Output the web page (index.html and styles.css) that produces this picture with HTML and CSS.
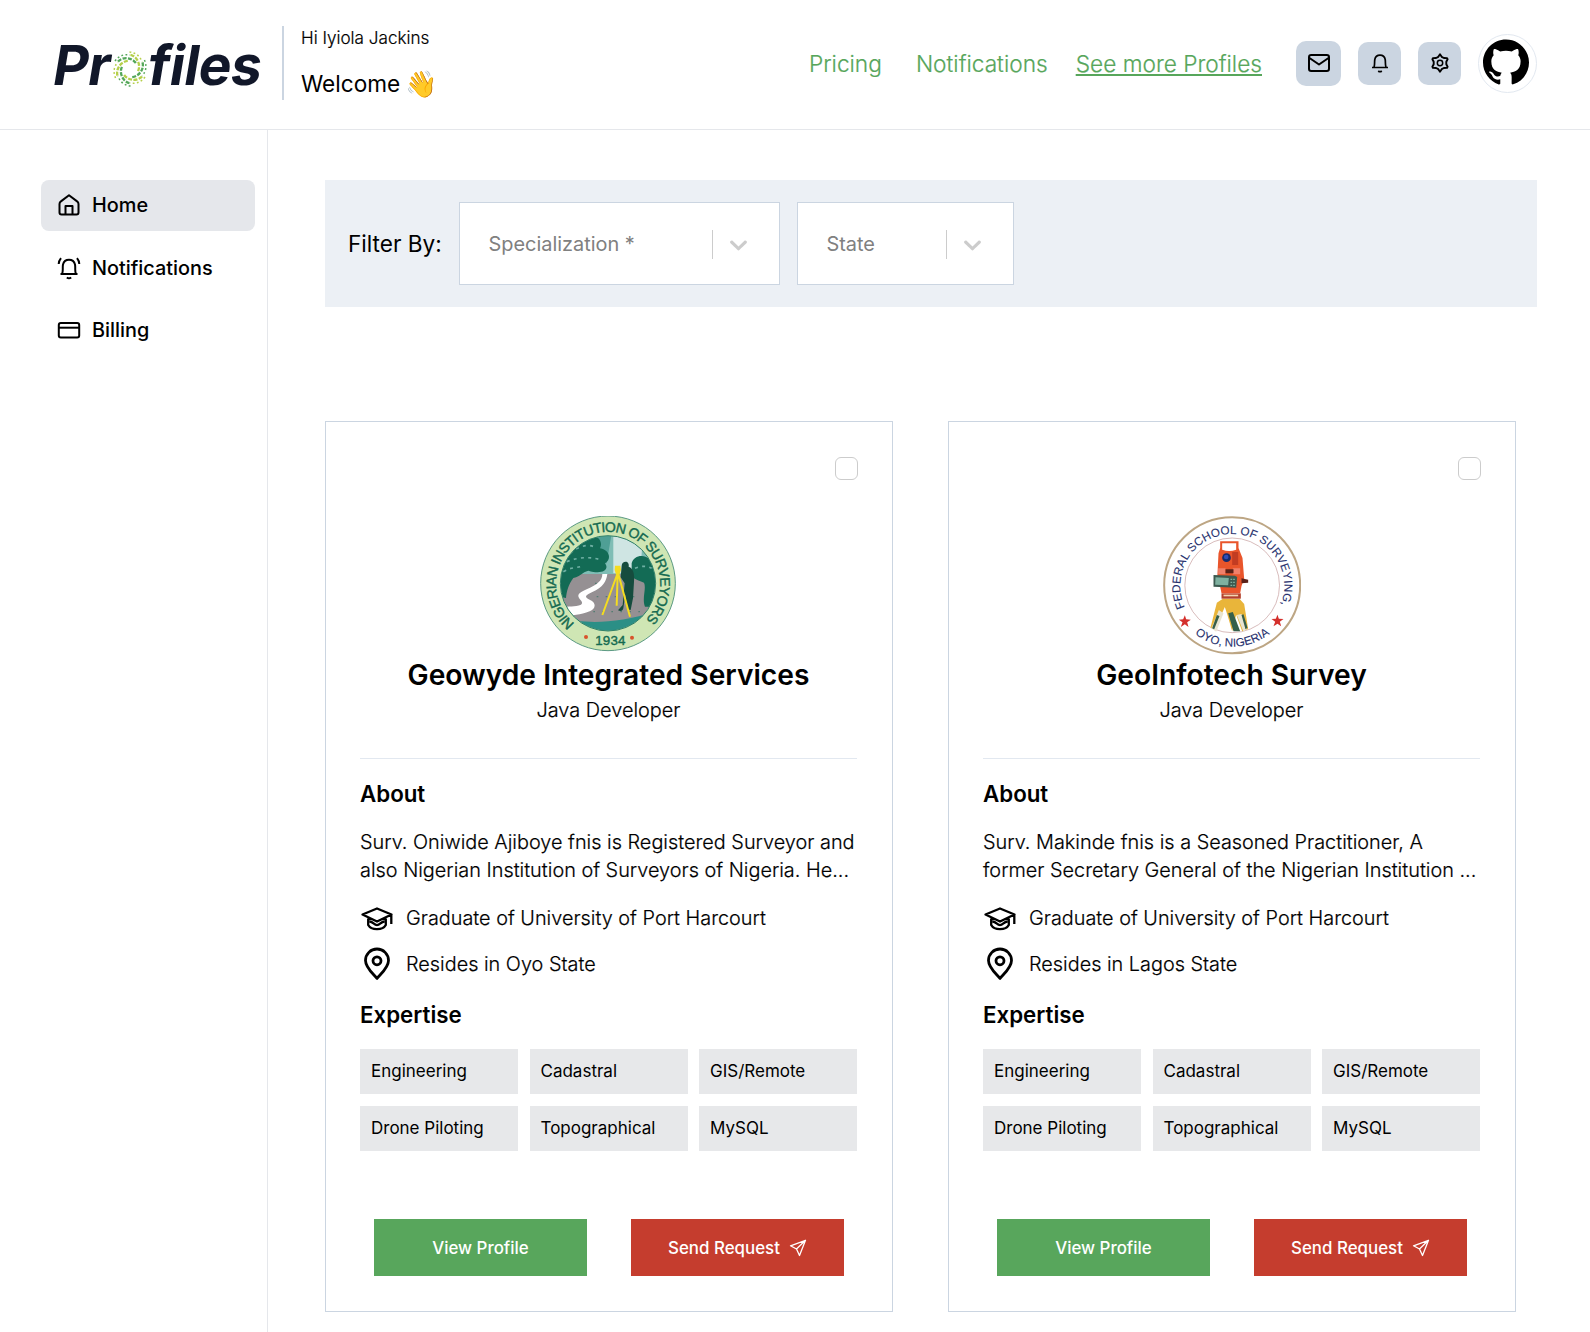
FILE: index.html
```html
<!DOCTYPE html>
<html lang="en">
<head>
<meta charset="utf-8">
<title>Profiles</title>
<link rel="stylesheet" href="styles.css">
</head>
<body>
<svg class="sprite" aria-hidden="true">
  <symbol id="i-cap" viewBox="0 0 34 34"><path d="M2.500 13.500 17 7.500l14.500 6L17 20.500Z M31.300 13.500v9.500 M8.200 17.500v6.500c3 5.500 14.600 5.500 17.600 0v-6.500 M9.500 20.500c3.500 0 4.500 3.700 7.500 3.700s4-3.700 7.500-3.700" fill="none" stroke="#000" stroke-width="2.300" stroke-linejoin="round"/></symbol>
  <symbol id="i-pin" viewBox="0 0 34 34"><path d="M17 31.500C14 27.500 5.500 21 5.500 13.500a11.500 11.500 0 0 1 23 0C28.500 21 20 27.500 17 31.500Z" fill="none" stroke="#000" stroke-width="2.800" stroke-linejoin="round"/><circle cx="17" cy="13.800" r="4" fill="none" stroke="#000" stroke-width="2.800"/></symbol>
  <symbol id="i-send" viewBox="0 0 18 18"><path d="M16.500 1.300 1.500 6.800l6 3.200 3 6.500Z M16.500 1.300 7.500 10" fill="none" stroke="#fff" stroke-width="1.300" stroke-linejoin="round"/></symbol>
  <symbol id="i-chev" viewBox="0 0 20 20"><path fill="#ccc" d="M4.516 7.548c.436-.446 1.043-.481 1.576 0L10 11.295l3.908-3.747c.533-.481 1.141-.446 1.574 0 .436.445.408 1.197 0 1.615-.406.418-4.695 4.502-4.695 4.502a1.100 1.100 0 0 1-1.576 0S4.924 9.581 4.516 9.163s-.436-1.170 0-1.615z"/></symbol>
</svg>
<header class="header">
  <div class="brand">
    <span>Pr</span>
    <svg class="swirl" viewBox="-19 -19 38 38">
      <defs><g id="arm" fill="none" stroke="currentColor"><path d="M-12-7.500C-8-12 2-12.500 6.500-5" stroke-width="2.300" stroke-dasharray="4 1.400"/><path d="M-15-8C-11-13.500-6-15 0-14" stroke-width="1.500" stroke-dasharray="1.800 2.400"/></g></defs>
      <g class="leaf"><use href="#arm"/><use href="#arm" transform="rotate(120)"/><use href="#arm" transform="rotate(240)"/></g>
      <g class="lime"><use href="#arm" transform="rotate(60)"/><use href="#arm" transform="rotate(180)"/><use href="#arm" transform="rotate(300)"/></g>
    </svg>
    <span class="tail">files</span>
  </div>
  <div class="greeting">
    <p class="hi">Hi Iyiola Jackins</p>
    <p class="welcome"><span>Welcome</span> <span class="wave">👋</span></p>
  </div>
  <nav class="links">
    <a>Pricing</a><a>Notifications</a><a class="underlined">See more Profiles</a>
  </nav>
  <div class="actions">
    <button class="action action-lg"><svg width="24" height="24" viewBox="0 0 24 24"><rect x="2" y="4" width="20" height="16" rx="2.200"/><path d="m2.500 7 9.500 6.500L21.500 7"/></svg></button>
    <button class="action"><svg width="20" height="20" viewBox="0 0 20 20"><path d="M2 14.500h16M4 14.500c1-3 .3-5 .8-8a5.300 5.300 0 0 1 10.400 0c.5 3-.2 5 .8 8M8.200 18c1 .8 2.600.8 3.600 0" stroke-width="1.700"/></svg></button>
    <button class="action"><svg width="20" height="20" viewBox="0 0 20 20"><path d="M8.300 3.800 10 1.300l1.700 2.500 2.200 1.200 3.200.1.500 1.200-1.300 2.500v2.400l1.300 2.500-.5 1.200-3.200.1-2.200 1.200L10 18.700l-1.700-2.500L6.100 15l-3.200-.1-.5-1.200 1.300-2.500V8.800L2.400 6.300l.5-1.200L6.100 5Z" stroke-width="1.900"/><circle cx="10" cy="10" r="2.700" stroke-width="1.500"/></svg></button>
    <div class="avatar"><svg width="46" height="46" viewBox="0 0 24 24"><path d="M12 .297c-6.630 0-12 5.373-12 12 0 5.303 3.438 9.800 8.205 11.385.6.113.82-.258.82-.577 0-.285-.01-1.040-.015-2.040-3.338.724-4.042-1.610-4.042-1.610C4.422 18.070 3.633 17.700 3.633 17.700c-1.087-.744.084-.729.084-.729 1.205.084 1.838 1.236 1.838 1.236 1.070 1.835 2.809 1.305 3.495.998.108-.776.417-1.305.76-1.605-2.665-.3-5.466-1.332-5.466-5.930 0-1.310.465-2.380 1.235-3.220-.135-.303-.54-1.523.105-3.176 0 0 1.005-.322 3.300 1.230.96-.267 1.980-.399 3-.405 1.020.006 2.040.138 3 .405 2.280-1.552 3.285-1.230 3.285-1.230.645 1.653.24 2.873.12 3.176.765.84 1.230 1.910 1.230 3.220 0 4.610-2.805 5.625-5.475 5.920.42.36.81 1.096.81 2.220 0 1.606-.015 2.896-.015 3.286 0 .315.21.69.825.57C20.565 22.092 24 17.592 24 12.297c0-6.627-5.373-12-12-12"/></svg></div>
  </div>
</header>
<div class="body">
  <aside class="sidebar">
    <a class="side-item active"><svg width="24" height="24" viewBox="0 0 24 24"><path d="M2.500 11v8.500a2 2 0 0 0 2 2h15a2 2 0 0 0 2-2V11c0-1-.5-2-1.400-2.600L12 2.200 3.900 8.400C3 9 2.500 10 2.500 11ZM8.500 21.500V13h7v8.500"/></svg><span>Home</span></a>
    <a class="side-item"><svg width="24" height="24" viewBox="0 0 24 24"><path d="M3.500 18h17M5 18c1.500-3 .3-6 1-9.500a6.200 6.200 0 0 1 12 0c.7 3.500-.5 6.500 1 9.500M4 2.200C2.500 4 1.800 6 1.700 8M20 2.200c1.500 1.800 2.200 3.800 2.300 5.800M9.800 21.500c1.400 1 3 1 4.400 0"/></svg><span>Notifications</span></a>
    <a class="side-item"><svg width="24" height="24" viewBox="0 0 24 24"><rect x="1.800" y="5" width="20.400" height="14.500" rx="2"/><path d="M2 9.700h20"/></svg><span>Billing</span></a>
  </aside>
  <main class="main">
    <section class="filter">
      <span class="filter-label">Filter By:</span>
      <div class="select select-wide"><span>Specialization *</span><i></i><svg width="29" height="29"><use href="#i-chev"/></svg></div>
      <div class="select select-narrow"><span>State</span><i></i><svg width="29" height="29"><use href="#i-chev"/></svg></div>
    </section>
    <section class="cards">
      <article class="card">
        <span class="check"></span>
        <svg class="emblem" viewBox="57 48 417 417">
          <defs>
            <path id="arc1" d="M164 371A156 156 0 1 1 366 370"/>
            <clipPath id="disc"><circle cx="264" cy="250" r="142"/></clipPath>
          </defs>
          <circle cx="264" cy="250" r="202" fill="#cfe6b4" stroke="#5b9a83" stroke-width="3"/>
          <g clip-path="url(#disc)">
            <path fill="#7fbdb5" d="M120 100h290v140H120z"/>
            <path fill="#cfe5e3" d="M280 100h90l-10 120h-80z"/>
            <path fill="#4f9f95" d="M215 100h60l-15 90h-40z"/>
            <path fill="#959093" d="M110 222h310v150H110z"/>
            <path fill="#2b8f86" d="M110 355c90 15 180 20 310-25v70H110z"/>
            <path fill="#136b55" d="M120 290V190c5-55 50-80 85-85 30 0 45 20 35 40 30 5 35 35 15 45 15 20-10 35-50 22-20 5-20 15-45 22-15 20-20 40-22 60ZM335 190c5-25 40-30 55-10l30 30v110h-45c-10-25 5-55-3-72-30-10-45-20-37-35Z"/>
            <path fill="none" stroke="#6fb0a4" stroke-width="5" stroke-dasharray="9 13" d="M150 160c30-25 60-30 80-15M140 185c40-15 70-15 105-5M130 215c25-15 40-10 60-18M345 205c20-8 35-8 50 0"/>
            <path fill="none" stroke="#557d73" stroke-width="4" stroke-dasharray="5 22" d="M230 290h120M220 335h150M225 250h25"/>
            <path fill="#fff" d="M247 222h15c-3 22-13 40-45 54-22 10-25 15-8 23 22 10 18 27 0 35-28 12-52 10-82 18l-2-28c20-8 40-2 58-10 10-7-6-15-8-25-2-22 72-25 72-67Z"/>
            <path fill="#164c3e" d="M305 197c0-8 6-12 12-12s11 6 9 15c14 5 18 22 16 45l-3 50-7 35-10-2-6-45-6 42c-2 10-9 9-16 6l14-16 6-65-12-18Z"/>
            <path fill="none" stroke="#f4dc20" stroke-width="6" d="M292 222 247 345M295 222l35 128M293 222l-3 95"/>
            <path fill="#f4dc20" d="M285 197h16l2 12-5 15h-10l-4-14Z"/>
          </g>
          <circle cx="264" cy="250" r="143" fill="none" stroke="#2f8069" stroke-width="3"/>
          <text class="ring-text green" font-size="42"><textPath href="#arc1" textLength="744">NIGERIAN INSTITUTION OF SURVEYORS</textPath></text>
          <text class="ring-text green" x="226" y="434" font-size="40" textLength="90">1934</text>
          <circle cx="198" cy="411" r="6" fill="#d8532b"/><circle cx="336" cy="413" r="6" fill="#d8532b"/>
        </svg>
        <h2 class="name">Geowyde Integrated Services</h2>
        <p class="role">Java Developer</p>
        <hr>
        <h3 class="heading">About</h3>
        <p class="about">Surv. Oniwide Ajiboye fnis is Registered Surveyor and<br>also Nigerian Institution of Surveyors of Nigeria. He...</p>
        <div class="facts">
          <div class="fact"><svg width="34" height="34"><use href="#i-cap"/></svg><span>Graduate of University of Port Harcourt</span></div>
          <div class="fact"><svg width="34" height="34"><use href="#i-pin"/></svg><span>Resides in Oyo State</span></div>
        </div>
        <h3 class="heading expertise">Expertise</h3>
        <div class="tags"><span>Engineering</span><span>Cadastral</span><span>GIS/Remote</span><span>Drone Piloting</span><span>Topographical</span><span>MySQL</span></div>
        <div class="buttons"><button class="btn view"><span>View Profile</span></button><button class="btn send"><span>Send Request</span><svg width="18" height="18"><use href="#i-send"/></svg></button></div>
      </article>
      <article class="card">
        <span class="check"></span>
        <svg class="emblem" viewBox="67.5 48 417 417">
          <defs>
            <path id="arc2" d="M136 322A156 156 0 1 1 424 314"/>
            <path id="arc3" d="M166 402A184 184 0 0 0 394 399"/>
          </defs>
          <circle cx="278" cy="256" r="204" fill="#fff" stroke="#bda684" stroke-width="6"/>
          <circle cx="278" cy="256" r="142" fill="#fff" stroke="#c49a9a" stroke-width="2"/>
          <path fill="#e9b53a" d="m232 308 18-12h50l14 16 12 75-18 7-18-50-12 50-14-48-8-25-18 40-12 28-13-6Z"/>
          <path fill="#e8e4d0" d="m238 330 14 10-22 55-14-10ZM292 345l14-3 16 45-10 8Z"/>
          <path fill="#365f4a" d="m232 345 8 3-16 40-6-3ZM266 340l14-4 22 58h-20ZM306 345l6-2 12 40-6 5Z"/>
          <path fill="#b3402c" d="M246 280h58v16h-58Z"/><path fill="#f3d6b0" d="M252 284h44v5h-44Z"/>
          <path fill="#e9552b" d="M242 124h55v20l12 30 5 62-8 22-4 22h-56l-4-20-9-20 4-80 5-16Z"/>
          <path fill="#fff" d="M248 130h42v19c-15 5-27 5-42 0Z"/>
          <path fill="#c23c22" d="M278 156h18v39h-18Z"/><path fill="#f0806a" d="M236 205h22v18h-22ZM280 205h22v18h-22Z"/>
          <circle cx="261" cy="173" r="13" fill="#172a6b"/><circle cx="260" cy="171" r="7" fill="#2f4fb8"/>
          <path fill="#5a2018" d="M258 208h24v12h-24ZM306 235l20 4v9l-20 2Z"/>
          <path fill="#3c5a50" d="m222 225 64 2 7 4-3 32-68-3Z"/><path fill="#7fb1a0" d="m228 232 40 2-2 22-39-2Z"/>
          <path fill="none" stroke="#7fb1a0" stroke-width="4" stroke-dasharray="5 3" d="M273 238h16M273 247h16M273 256h14"/>
          <text class="ring-text navy" font-size="35"><textPath href="#arc2" textLength="612">FEDERAL SCHOOL OF SURVEYING,</textPath></text>
          <text class="ring-text navy" font-size="35"><textPath href="#arc3" textLength="242">OYO, NIGERIA</textPath></text>
          <path id="star" fill="#d4302c" d="m136 346 4 12 14 1-11 8 4 14-11-8-12 8 5-14-11-8 13-1Z"/><use href="#star" x="278" y="-2"/>
        </svg>
        <h2 class="name">GeoInfotech Survey</h2>
        <p class="role">Java Developer</p>
        <hr>
        <h3 class="heading">About</h3>
        <p class="about">Surv. Makinde fnis is a Seasoned Practitioner, A<br>former Secretary General of the Nigerian Institution ...</p>
        <div class="facts">
          <div class="fact"><svg width="34" height="34"><use href="#i-cap"/></svg><span>Graduate of University of Port Harcourt</span></div>
          <div class="fact"><svg width="34" height="34"><use href="#i-pin"/></svg><span>Resides in Lagos State</span></div>
        </div>
        <h3 class="heading expertise">Expertise</h3>
        <div class="tags"><span>Engineering</span><span>Cadastral</span><span>GIS/Remote</span><span>Drone Piloting</span><span>Topographical</span><span>MySQL</span></div>
        <div class="buttons"><button class="btn view"><span>View Profile</span></button><button class="btn send"><span>Send Request</span><svg width="18" height="18"><use href="#i-send"/></svg></button></div>
      </article>
    </section>
  </main>
</div>
</body>
</html>
```
FILE: styles.css
```css
* { box-sizing: border-box; margin: 0; padding: 0; }
body { width: 1590px; height: 1332px; overflow: hidden; background: #fff; color: #000; font-family: Inter, "Liberation Sans", sans-serif; }
.sprite { position: absolute; width: 0; height: 0; }
button { border: 0; font: inherit; }
svg { display: block; flex: none; }

.header { display: flex; align-items: center; height: 130px; padding: 0 53px 3px 54px; border-bottom: 1px solid #e5e7eb; }
.brand { display: flex; align-items: center; width: 228px; margin-top: 3px; color: #111729; font-size: 55px; font-weight: 700; letter-spacing: -.5px; line-height: 68px; }
.brand span { transform: skewX(-9.400deg); }
.swirl { width: 38px; height: 38px; margin: 8px 0 0 0; }
.leaf { color: #54a759; }
.lime { color: #b5cf4a; }
.greeting { height: 74px; padding-left: 17px; border-left: 2px solid #cbd5e1; }
.hi { font-size: 17.100px; line-height: 24px; }
.welcome { display: flex; gap: 5px; margin-top: 17px; font-size: 22.600px; line-height: 34px; }
.wave { font-size: 26px; }
.hi, .links, .role, .about, .fact { font-weight: 300; -webkit-text-stroke: .2px currentColor; }
.links { display: flex; margin: 2px 0 0 auto; color: #57a65b; font-size: 22.700px; line-height: 30px; }
.links a + a { margin-left: 34px; }
.links a.underlined { margin-left: 28px; text-decoration: underline; }
.actions { display: flex; align-items: center; gap: 17px; margin-left: 34px; }
.action { display: flex; align-items: center; justify-content: center; width: 43px; height: 43px; border-radius: 10px; background: #cbd5e1; }
.action-lg { width: 45px; height: 45px; }
.action svg, .side-item svg { fill: none; stroke: #000; stroke-width: 2; stroke-linejoin: round; }
.avatar { width: 59px; height: 59px; padding: 4px; border: 1px solid #e2e8f0; border-radius: 50%; }

.body { display: flex; height: 1202px; }
.sidebar { width: 268px; padding: 50px 12px 0 41px; border-right: 1px solid #e5e7eb; }
.side-item { display: flex; align-items: center; gap: 11px; height: 51px; margin-bottom: 11.500px; padding: 0 0 1px 16px; border-radius: 8px; font-size: 19.850px; font-weight: 500; }
.side-item.active { background: #e5e7eb; }

.main { flex: 1; padding: 50px 53px 0 57px; }
.filter { display: flex; align-items: center; height: 127px; padding-left: 23px; background: #ecf0f5; }
.filter-label { width: 111px; font-size: 22.600px; }
.select { display: flex; align-items: center; height: 83px; padding: 1px 26px 0 28.500px; border: 1px solid #cbd5e1; background: #fff; color: #808080; font-size: 19.900px; }
.select i { width: 1px; height: 29px; margin-left: auto; margin-right: 11px; background: #ccc; }
.select-wide { width: 321px; }
.select-narrow { width: 217px; margin-left: 17px; }

.cards { display: flex; gap: 55px; margin-top: 114px; }
.card { display: flex; flex-direction: column; width: 568px; height: 891px; padding: 34px 35px 34px 34px; border: 1px solid #cbd5e1; }
.check { align-self: flex-end; width: 23px; height: 23px; margin: 1px -1px 0 0; border: 1px solid #ccc; border-radius: 6px; }
.emblem { align-self: center; width: 139px; height: 139px; margin: 36px 1px 0 0; }
.ring-text { font-family: "Liberation Sans", Arial, sans-serif; }
.green { fill: #156a50; stroke: #156a50; stroke-width: 1.200; }
.navy { fill: #27316e; stroke: #27316e; stroke-width: .3; }
.name { font-size: 28.200px; font-weight: 600; line-height: 40px; text-align: center; }
.role { margin-top: 1px; font-size: 19.900px; line-height: 28px; text-align: center; }
.card hr { height: 1px; margin-top: 34px; border: 0; background: #e2e8f0; }
.heading { margin-top: 18px; font-size: 22.300px; font-weight: 600; line-height: 34px; }
.about { margin-top: 17px; font-size: 19.880px; line-height: 28px; white-space: nowrap; }
.facts { display: flex; flex-direction: column; gap: 11.500px; margin-top: 17px; }
.fact { display: flex; align-items: center; gap: 12px; font-size: 19.850px; line-height: 34px; }
.expertise { margin-top: 17px; }
.tags { display: grid; grid-template-columns: repeat(3, 1fr); gap: 12px 11.500px; margin-top: 17px; }
.tags span { height: 45px; padding-left: 11px; background: #e7e8ea; font-size: 17px; line-height: 45px; }
.buttons { display: flex; justify-content: space-between; margin: auto 13px 1px 14px; }
.btn { display: flex; align-items: center; justify-content: center; gap: 9px; width: 213px; height: 57px; color: #fff; font-size: 16.900px; font-weight: 500; }
.view { background: #58a65c; }
.send { background: #c53d2e; }
```
